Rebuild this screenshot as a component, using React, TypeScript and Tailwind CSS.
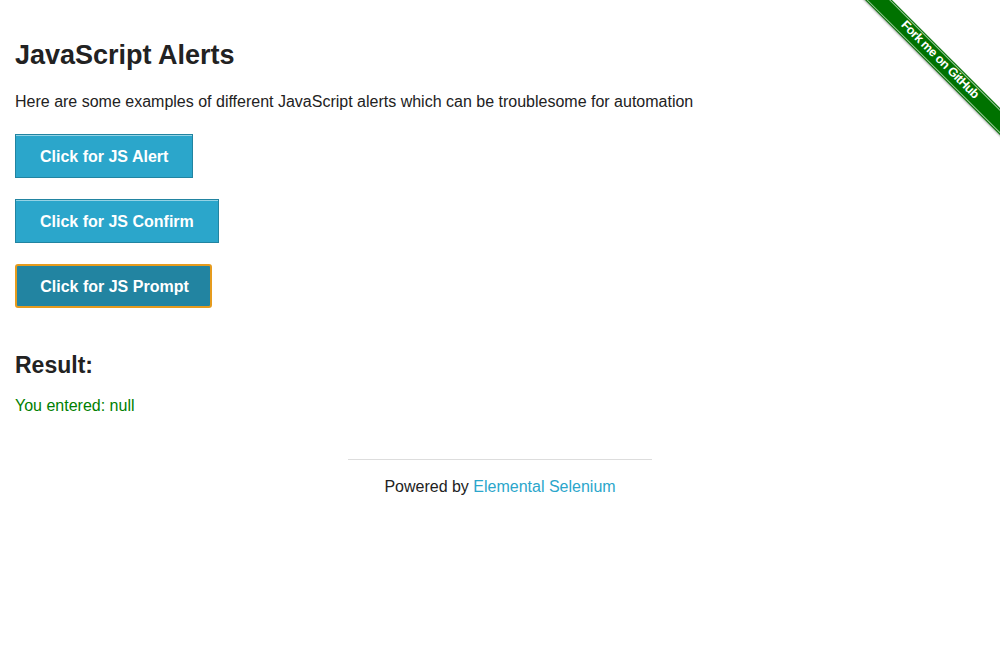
import React from "react";

export default function App() {
  const font = { fontFamily: '"Liberation Sans", Arial, Helvetica, sans-serif' };
  return (
    <div className="relative w-[1000px] h-[660px] bg-white overflow-hidden text-[#222222]" style={font}>
      {/* Fork me ribbon */}
      <div className="absolute top-0 right-0 w-[149px] h-[149px] overflow-hidden">
        <div className="absolute left-[-12px] top-[51px] w-[200px] h-[19px] bg-[#007200] rotate-45 flex items-center justify-center shadow-[0_1px_2px_rgba(0,0,0,0.35)]">
          <div className="absolute inset-x-0 top-[1px] h-[1px] bg-white/60" />
          <div className="absolute inset-x-0 bottom-[1px] h-[1px] bg-white/60" />
          <span className="relative text-white font-bold text-[12.5px] leading-none tracking-[-0.5px] mt-[-2px]">
            Fork me on GitHub
          </span>
        </div>
      </div>

      <div className="px-[15px] pt-[39px]">
        <h3 className="text-[27px] leading-[32px] font-bold">JavaScript Alerts</h3>
        <p className="mt-[19px] text-[16px] leading-[24px]">
          Here are some examples of different JavaScript alerts which can be troublesome for automation
        </p>
        <div className="mt-[20px] flex flex-col items-start gap-[21px]">
          <button className="h-[44px] px-[24px] pt-[2px] bg-[#2ba6cb] border border-[#2284a1] shadow-[inset_0_1px_0_rgba(255,255,255,0.5)] text-white font-bold text-[16px]">
            Click for JS Alert
          </button>
          <button className="h-[44px] px-[24px] pt-[2px] bg-[#2ba6cb] border border-[#2284a1] shadow-[inset_0_1px_0_rgba(255,255,255,0.5)] text-white font-bold text-[16px]">
            Click for JS Confirm
          </button>
          <button className="h-[44px] w-[197px] pt-[2px] pl-[2px] bg-[#2284a1] border-2 border-[#e59b1e] rounded-[3px] text-white font-bold text-[16px]">
            Click for JS Prompt
          </button>
        </div>
        <h4 className="mt-[43px] text-[23px] leading-[28px] font-bold">Result:</h4>
        <p className="mt-[15px] text-[16px] leading-[24px] text-[#008000]">You entered: null</p>
      </div>

      <div className="flex flex-col items-center mt-[41px]">
        <div className="w-[304px] h-[1px] bg-[#dddddd]" />
        <div className="mt-[15px] text-[16px] leading-[24px]">
          Powered by <span className="text-[#2ba6cb]">Elemental Selenium</span>
        </div>
      </div>
    </div>
  );
}
